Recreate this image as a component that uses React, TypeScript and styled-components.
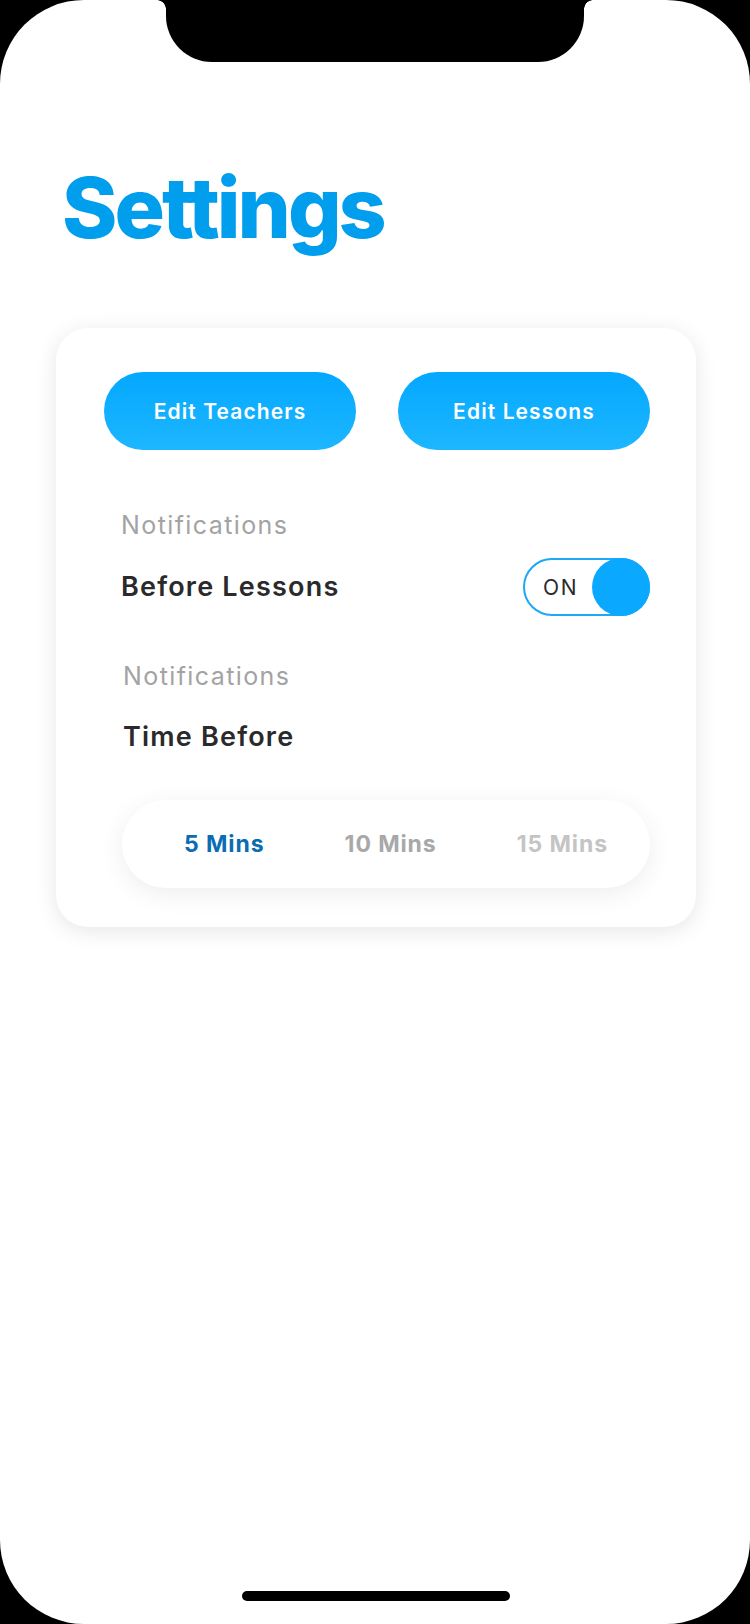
import React from "react";
import styled, { createGlobalStyle } from "styled-components";

const GlobalStyle = createGlobalStyle`
  html, body {
    margin: 0;
    padding: 0;
    background: #000;
  }
  * { box-sizing: border-box; }
`;

const Phone = styled.div`
  width: 750px;
  height: 1624px;
  background: #000;
  position: relative;
  overflow: hidden;
`;

const Screen = styled.div`
  width: 100%;
  height: 100%;
  background: #fff;
  border-radius: 84px;
  display: flex;
  flex-direction: column;
  font-family: Inter, "Open Sans", sans-serif;
`;

const Notch = styled.div`
  position: absolute;
  top: 0;
  left: 166px;
  width: 418px;
  height: 62px;
  background: #000;
  border-radius: 0 0 46px 46px;

  &::before,
  &::after {
    content: "";
    position: absolute;
    top: 0;
    width: 9px;
    height: 9px;
  }
  &::before {
    left: -9px;
    background: radial-gradient(circle at 0 100%, transparent 8.5px, #000 9px);
  }
  &::after {
    right: -9px;
    background: radial-gradient(circle at 100% 100%, transparent 8.5px, #000 9px);
  }
`;

const Title = styled.h1`
  margin: 158px 0 0 62px;
  font-family: Inter, sans-serif;
  font-weight: 800;
  font-size: 84px;
  line-height: 100px;
  letter-spacing: -3px;
  color: #009eec;
`;

const Card = styled.section`
  margin: 70px 0 0 56px;
  width: 640px;
  background: #fff;
  border-radius: 32px;
  box-shadow: 0 4px 22px rgba(0, 0, 0, 0.1);
  padding: 44px 46px 39px 48px;
  display: flex;
  flex-direction: column;
`;

const ButtonRow = styled.div`
  display: grid;
  grid-template-columns: 252px 252px;
  column-gap: 42px;
`;

const PillButton = styled.button`
  height: 78px;
  border: none;
  border-radius: 39px;
  background: linear-gradient(180deg, #04a8ff 0%, #1db6ff 100%);
  color: #fff;
  font-family: Inter, sans-serif;
  font-weight: 600;
  font-size: 21px;
  letter-spacing: 1.1px;
  cursor: pointer;
`;

const Group = styled.div<{ $top: number; $indent: number }>`
  margin-top: ${(p) => p.$top}px;
  padding-left: ${(p) => p.$indent}px;
  display: flex;
  flex-direction: column;
`;

const Caption = styled.div`
  font-size: 25px;
  line-height: 30px;
  font-weight: 400;
  color: #a3a3a3;
  letter-spacing: 1.4px;
`;

const SettingRow = styled.div<{ $gap: number }>`
  margin-top: ${(p) => p.$gap}px;
  display: flex;
  align-items: center;
  justify-content: space-between;
`;

const SettingName = styled.div`
  font-size: 27px;
  line-height: 34px;
  font-weight: 600;
  color: #2a2a2c;
  letter-spacing: 1.2px;
`;

const Toggle = styled.div`
  width: 127px;
  height: 58px;
  border: 2px solid #1ea8f5;
  border-radius: 29px;
  display: flex;
  align-items: center;
  justify-content: space-between;
  position: relative;
`;

const ToggleText = styled.span`
  margin-left: 18px;
  font-size: 21px;
  font-weight: 400;
  color: #2a2a2c;
  letter-spacing: 1.8px;
`;

const Knob = styled.span`
  width: 58px;
  height: 58px;
  margin-right: -2px;
  border-radius: 50%;
  background: #0aa9ff;
`;

const Segment = styled.div`
  margin-top: 46px;
  height: 88px;
  border-radius: 44px;
  background: #fff;
  box-shadow: 0 6px 26px rgba(0, 0, 0, 0.07);
  display: flex;
  align-items: center;
  justify-content: space-between;
  padding: 0 42px 0 62px;
`;

const SegmentItem = styled.span<{ $color: string }>`
  font-size: 23px;
  font-weight: 700;
  color: ${(p) => p.$color};
  letter-spacing: 0.9px;
`;

const HomeIndicator = styled.div`
  margin: auto 0 23px 242px;
  width: 268px;
  height: 10px;
  border-radius: 5px;
  background: #000;
`;

export default function App() {
  return (
    <>
      <GlobalStyle />
      <Phone>
        <Screen>
          <Title>Settings</Title>
          <Card>
            <ButtonRow>
              <PillButton>Edit Teachers</PillButton>
              <PillButton>Edit Lessons</PillButton>
            </ButtonRow>
            <Group $top={60} $indent={17}>
              <Caption>Notifications</Caption>
              <SettingRow $gap={18}>
                <SettingName>Before Lessons</SettingName>
                <Toggle>
                  <ToggleText>ON</ToggleText>
                  <Knob />
                </Toggle>
              </SettingRow>
            </Group>
            <Group $top={45} $indent={19}>
              <Caption>Notifications</Caption>
              <SettingRow $gap={29}>
                <SettingName>Time Before</SettingName>
              </SettingRow>
            </Group>
            <Segment style={{ marginLeft: 18 }}>
              <SegmentItem $color="#0a6cb2">5 Mins</SegmentItem>
              <SegmentItem $color="#a8a8a8">10 Mins</SegmentItem>
              <SegmentItem $color="#c4c4c4">15 Mins</SegmentItem>
            </Segment>
          </Card>
          <HomeIndicator />
        </Screen>
        <Notch />
      </Phone>
    </>
  );
}
